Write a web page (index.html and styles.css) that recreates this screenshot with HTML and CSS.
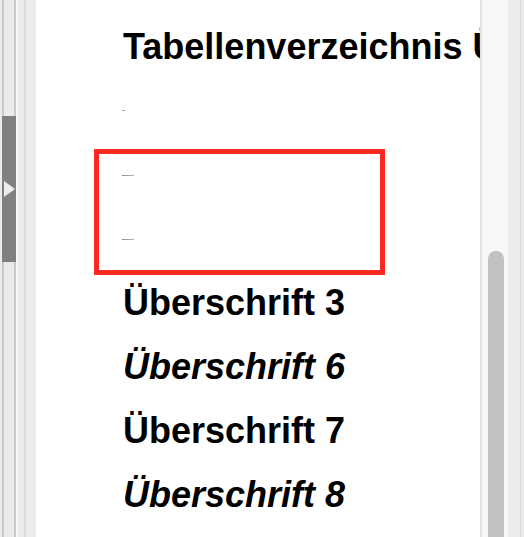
FILE: index.html
```html
<!DOCTYPE html>
<html lang="de">
<head>
<meta charset="utf-8">
<title>Navigator</title>
<link rel="stylesheet" href="styles.css">
</head>
<body>
<div class="app">
  <div class="side-left">
    <div class="handle"><span class="arrow"></span></div>
  </div>
  <div class="doc">
    <div class="row">Tabellenverzeichnis Überschrift</div>
    <div class="row mark-row"><span class="mark mark-short"></span></div>
    <div class="row mark-row"><span class="mark"></span></div>
    <div class="row mark-row"><span class="mark"></span></div>
    <div class="row">Überschrift 3</div>
    <div class="row italic">Überschrift 6</div>
    <div class="row">Überschrift 7</div>
    <div class="row italic">Überschrift 8</div>
    <div class="highlight"></div>
  </div>
  <div class="side-right">
    <div class="track"><div class="thumb"></div></div>
    <div class="ruler"></div>
  </div>
</div>
</body>
</html>
```
FILE: styles.css
```css
html, body {
  margin: 0;
  padding: 0;
  background: #ffffff;
}
.app {
  display: flex;
  width: 524px;
  height: 537px;
  overflow: hidden;
}
.side-left {
  width: 36px;
  flex: none;
  display: flex;
  flex-direction: column;
  background: linear-gradient(to right,
    #ebebeb 0, #ebebeb 2px,
    #c9c9c9 2px, #c9c9c9 4px,
    #ebebeb 4px, #ebebeb 14px,
    #c9c9c9 14px, #c9c9c9 16px,
    #f8f8f8 16px, #f8f8f8 18px,
    #ebebeb 18px, #ebebeb 24px,
    #dcdcdc 24px, #dcdcdc 26px,
    #ebebeb 26px, #ebebeb 36px);
}
.handle {
  margin-top: 116px;
  margin-left: 2px;
  width: 14px;
  height: 146px;
  background: #808080;
  display: flex;
  align-items: center;
  padding-left: 2px;
  box-sizing: border-box;
}
.arrow {
  width: 0;
  height: 0;
  border-top: 8px solid transparent;
  border-bottom: 8px solid transparent;
  border-left: 11px solid #ececec;
}
.doc {
  position: relative;
  flex: 1;
  min-width: 0;
  overflow: hidden;
  padding: 15px 0 0 87px;
  font-family: "Liberation Sans", Arial, sans-serif;
  font-weight: bold;
  font-size: 36px;
  color: #000;
}
.row {
  height: 64px;
  line-height: 64px;
  white-space: nowrap;
}
.mark-row {
  box-sizing: border-box;
  padding-top: 32px;
}
.italic {
  font-style: italic;
}
.mark {
  display: block;
  width: 12px;
  height: 1px;
  margin-left: -1px;
  background: linear-gradient(to right, #8a8a8a, #b8b8b8);
}
.mark-short {
  width: 3px;
  margin-top: -1px;
  background: #a0a0a0;
}
.highlight {
  position: absolute;
  left: 58px;
  top: 149px;
  width: 281px;
  height: 116px;
  border: 5px solid #fb2b1f;
}
.side-right {
  width: 44px;
  flex: none;
  display: flex;
  border-left: 2px solid #e3e3e3;
  box-sizing: border-box;
}
.track {
  width: 26px;
  background: #f8f8f8;
  display: flex;
  flex-direction: column;
  padding: 0 4px 0 6px;
  box-sizing: border-box;
}
.thumb {
  margin-top: 251px;
  flex: 1;
  background: #c1c1c1;
  border-radius: 8px 8px 0 0;
}
.ruler {
  flex: 1;
  background: linear-gradient(to right,
    #ebebeb 0, #ebebeb 12px,
    #dadada 12px, #dadada 13px,
    #ebebeb 13px);
}
```
